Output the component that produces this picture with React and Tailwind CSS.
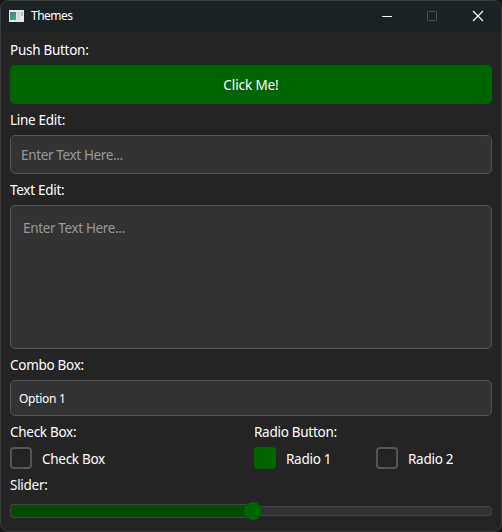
function Label({ children }) {
  return <div className="h-[19px] whitespace-nowrap pt-px leading-[19px]">{children}</div>;
}

function Choice({ checked, children, className = "" }) {
  return (
    <div className={`flex h-[22px] items-center gap-[10px] ${className}`}>
      <span
        className={`size-[22px] shrink-0 rounded-[4px] border-2 ${
          checked ? "border-[#006400] bg-[#006400]" : "border-[#555555] bg-[#242424]"
        }`}
      />
      <span className="whitespace-nowrap pt-[2px] leading-5">{children}</span>
    </div>
  );
}

function TitleBar() {
  return (
    <div className="flex h-[30px] items-center bg-[#1b2225] pl-2">
      <svg width="15" height="12" viewBox="0 0 15 12" className="shrink-0" shapeRendering="crispEdges">
        <defs>
          <linearGradient id="pane" x1="0" y1="0" x2="0.5" y2="1">
            <stop offset="0" stopColor="#4a78a0" />
            <stop offset="1" stopColor="#4aa878" />
          </linearGradient>
        </defs>
        <rect width="15" height="12" fill="#e6e8e9" />
        <rect x="1" y="2" width="6" height="8" fill="url(#pane)" />
        <rect x="8" y="2" width="3" height="8" fill="#d4d7d9" />
        <rect x="12" y="2" width="2" height="4" fill="#a9c4b4" />
      </svg>
      <span className="ml-[7px] text-[12px] leading-5 tracking-[-0.5px]">Themes</span>
      <svg width="104" height="12" viewBox="0 0 104 12" fill="none" className="ml-auto mr-[16px] shrink-0">
        <path d="M1 6.5H11" stroke="#ffffff" />
        <rect x="46.5" y="1.5" width="9" height="9" rx="0.5" stroke="#4b5052" />
        <path d="M92 1L102 11M102 1L92 11" stroke="#ffffff" strokeWidth="1.1" />
      </svg>
    </div>
  );
}

export default function App() {
  return (
    <div className="h-[532px] w-[502px] overflow-hidden bg-[#171615]">
      <div className="h-[532px] w-[502px] overflow-hidden rounded-[8px] border border-[#3c3c3c] bg-[#242424] font-['Noto_Sans','Open_Sans',sans-serif] text-[13.5px] tracking-[-0.28px] text-white">
        <TitleBar />
        <div className="flex flex-col gap-[6px] px-[9px] pt-[9px]">
          <Label>Push Button:</Label>
          <button className="h-[39px] rounded-[5px] bg-[#006400] pt-px text-center tracking-[-0.1px]">Click Me!</button>
          <Label>Line Edit:</Label>
          <div className="flex h-[39px] items-center rounded-[5px] border border-[#555555] bg-[#333333] pl-[10px] pt-[2px] tracking-[-0.36px] text-[#999999]">
            Enter Text Here...
          </div>
          <Label>Text Edit:</Label>
          <div className="h-[144px] rounded-[5px] border border-[#555555] bg-[#333333] pl-3 pt-3 leading-5 tracking-[-0.36px] text-[#999999]">
            Enter Text Here...
          </div>
          <Label>Combo Box:</Label>
          <div className="flex h-[36px] items-center rounded-[5px] border border-[#555555] bg-[#333333] pl-2 pt-px text-[12px]">
            Option 1
          </div>
          <div className="flex">
            <div className="flex w-[244px] flex-col gap-[6px]">
              <Label>Check Box:</Label>
              <Choice>Check Box</Choice>
            </div>
            <div className="flex flex-1 flex-col gap-[6px]">
              <Label>Radio Button:</Label>
              <div className="flex">
                <Choice checked className="w-[122px]">Radio 1</Choice>
                <Choice>Radio 2</Choice>
              </div>
            </div>
          </div>
          <Label>Slider:</Label>
          <div className="flex h-[22px] items-center">
            <div className="h-[14px] w-[236px] rounded-l-[4px] border border-r-0 border-[#444444] bg-[#004b00]" />
            <div className="z-10 -ml-[2px] size-[18px] shrink-0 rounded-full bg-[#006400]" />
            <div className="-ml-[2px] h-[10px] flex-1 rounded-r-[4px] border border-l-0 border-[#444444] bg-[#333333]" />
          </div>
        </div>
      </div>
    </div>
  );
}
